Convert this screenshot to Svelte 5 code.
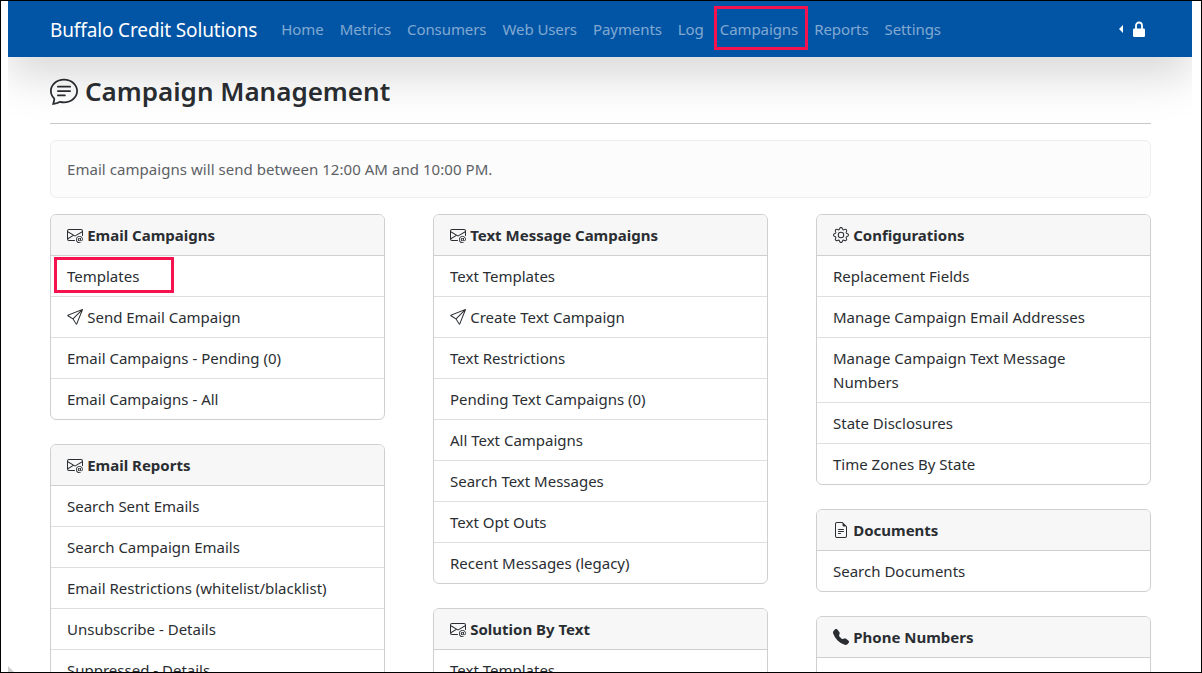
<script>
  const columns = [
    [
      { title: 'Email Campaigns', icon: 'mail', items: ['Templates', { send: true, label: 'Send Email Campaign' }, 'Email Campaigns - Pending (0)', 'Email Campaigns - All'] },
      { title: 'Email Reports', icon: 'mail', items: ['Search Sent Emails', 'Search Campaign Emails', 'Email Restrictions (whitelist/blacklist)', 'Unsubscribe - Details', 'Suppressed - Details'] }
    ],
    [
      { title: 'Text Message Campaigns', icon: 'mail', items: ['Text Templates', { send: true, label: 'Create Text Campaign' }, 'Text Restrictions', 'Pending Text Campaigns (0)', 'All Text Campaigns', 'Search Text Messages', 'Text Opt Outs', 'Recent Messages (legacy)'] },
      { title: 'Solution By Text', icon: 'mail', items: ['Text Templates'] }
    ],
    [
      { title: 'Configurations', icon: 'gear', items: ['Replacement Fields', 'Manage Campaign Email Addresses', 'Manage Campaign Text Message Numbers', 'State Disclosures', 'Time Zones By State'] },
      { title: 'Documents', icon: 'doc', items: ['Search Documents'] },
      { title: 'Phone Numbers', icon: 'phone', items: ['Manage Phone Numbers'] }
    ]
  ];
  const nav = ['Home', 'Metrics', 'Consumers', 'Web Users', 'Payments', 'Log', 'Campaigns', 'Reports', 'Settings'];
</script>

{#snippet icon(name)}
  {#if name === 'mail'}
    <svg class="ic" viewBox="0 0 16 16" fill="currentColor"><path d="M2 2a2 2 0 0 0-2 2v8.01A2 2 0 0 0 2 14h5.5a.5.5 0 0 0 0-1H2a1 1 0 0 1-.966-.741l5.64-3.471L8 9.583l7-4.2V8.5a.5.5 0 0 0 1 0V4a2 2 0 0 0-2-2H2Zm3.708 6.208L1 11.105V5.383l4.708 2.825ZM1 4.217V4a1 1 0 0 1 1-1h12a1 1 0 0 1 1 1v.217l-7 4.2-7-4.2Z"/><path d="M14.247 14.269c1.01 0 1.587-.857 1.587-2.025v-.21C15.834 10.43 14.64 9 12.52 9h-.035C10.42 9 9 10.36 9 12.432v.214C9 14.82 10.438 16 12.358 16h.044c.594 0 1.018-.074 1.237-.175v-.73c-.245.11-.673.18-1.18.18h-.044c-1.334 0-2.571-.788-2.571-2.655v-.157c0-1.657 1.058-2.724 2.64-2.724h.04c1.535 0 2.484 1.05 2.484 2.326v.118c0 .975-.324 1.39-.639 1.39-.232 0-.41-.148-.41-.42v-2.19h-.906v.569h-.03c-.084-.298-.368-.63-.954-.63-.778 0-1.259.555-1.259 1.4v.528c0 .892.49 1.434 1.26 1.434.471 0 .896-.227 1.014-.643h.043c.118.42.617.648 1.12.648Zm-2.453-1.588v-.227c0-.546.227-.791.573-.791.297 0 .572.192.572.708v.367c0 .573-.253.744-.564.744-.354 0-.581-.215-.581-.8Z"/></svg>
  {:else if name === 'gear'}
    <svg class="ic" viewBox="0 0 16 16" fill="currentColor"><path d="M8 4.754a3.246 3.246 0 1 0 0 6.492 3.246 3.246 0 0 0 0-6.492zM5.754 8a2.246 2.246 0 1 1 4.492 0 2.246 2.246 0 0 1-4.492 0z"/><path d="M9.796 1.343c-.527-1.79-3.065-1.79-3.592 0l-.094.319a.873.873 0 0 1-1.255.52l-.292-.16c-1.64-.892-3.433.902-2.54 2.541l.159.292a.873.873 0 0 1-.52 1.255l-.319.094c-1.79.527-1.79 3.065 0 3.592l.319.094a.873.873 0 0 1 .52 1.255l-.16.292c-.892 1.64.901 3.434 2.541 2.54l.292-.159a.873.873 0 0 1 1.255.52l.094.319c.527 1.79 3.065 1.79 3.592 0l.094-.319a.873.873 0 0 1 1.255-.52l.292.16c1.64.893 3.434-.902 2.54-2.541l-.159-.292a.873.873 0 0 1 .52-1.255l.319-.094c1.79-.527 1.79-3.065 0-3.592l-.319-.094a.873.873 0 0 1-.52-1.255l.16-.292c.893-1.64-.902-3.433-2.541-2.54l-.292.159a.873.873 0 0 1-1.255-.52l-.094-.319zm-2.633.283c.246-.835 1.428-.835 1.674 0l.094.319a1.873 1.873 0 0 0 2.693 1.115l.291-.16c.764-.415 1.6.42 1.184 1.185l-.159.292a1.873 1.873 0 0 0 1.116 2.692l.318.094c.835.246.835 1.428 0 1.674l-.319.094a1.873 1.873 0 0 0-1.115 2.693l.16.291c.415.764-.42 1.6-1.185 1.184l-.291-.159a1.873 1.873 0 0 0-2.693 1.116l-.094.318c-.246.835-1.428.835-1.674 0l-.094-.319a1.873 1.873 0 0 0-2.692-1.115l-.292.16c-.764.415-1.6-.42-1.184-1.185l.159-.291A1.873 1.873 0 0 0 1.945 8.93l-.319-.094c-.835-.246-.835-1.428 0-1.674l.319-.094A1.873 1.873 0 0 0 3.06 4.377l-.16-.292c-.415-.764.42-1.6 1.185-1.184l.292.159a1.873 1.873 0 0 0 2.692-1.115l.094-.319z"/></svg>
  {:else if name === 'doc'}
    <svg class="ic" viewBox="0 0 16 16" fill="currentColor"><path d="M5.5 7a.5.5 0 0 0 0 1h5a.5.5 0 0 0 0-1h-5zM5 9.5a.5.5 0 0 1 .5-.5h5a.5.5 0 0 1 0 1h-5a.5.5 0 0 1-.5-.5zm0 2a.5.5 0 0 1 .5-.5h2a.5.5 0 0 1 0 1h-2a.5.5 0 0 1-.5-.5z"/><path d="M9.5 0H4a2 2 0 0 0-2 2v12a2 2 0 0 0 2 2h8a2 2 0 0 0 2-2V4.5L9.5 0zm0 1v2A1.5 1.5 0 0 0 11 4.5h2V14a1 1 0 0 1-1 1H4a1 1 0 0 1-1-1V2a1 1 0 0 1 1-1h5.5z"/></svg>
  {:else if name === 'phone'}
    <svg class="ic" viewBox="0 0 16 16" fill="currentColor"><path fill-rule="evenodd" d="M1.885.511a1.745 1.745 0 0 1 2.61.163L6.29 2.98c.329.423.445.974.315 1.494l-.547 2.19a.678.678 0 0 0 .178.643l2.457 2.457a.678.678 0 0 0 .644.178l2.189-.547a1.745 1.745 0 0 1 1.494.315l2.306 1.794c.829.645.905 1.87.163 2.611l-1.034 1.034c-.74.74-1.846 1.065-2.877.702a18.634 18.634 0 0 1-7.01-4.42 18.634 18.634 0 0 1-4.42-7.009c-.362-1.03-.037-2.137.703-2.877L1.885.511z"/></svg>
  {:else if name === 'send'}
    <svg class="ic" viewBox="0 0 16 16" fill="currentColor"><path d="M15.854.146a.5.5 0 0 1 .11.54l-5.819 14.547a.75.75 0 0 1-1.329.124l-3.178-4.995L.643 7.184a.75.75 0 0 1 .124-1.33L15.314.037a.5.5 0 0 1 .54.11ZM6.636 10.07l2.761 4.338L14.13 2.576 6.636 10.07Zm6.787-8.201L1.591 6.602l4.339 2.76 7.494-7.493Z"/></svg>
  {/if}
{/snippet}

<div class="frame">
  <div class="page">
    <nav class="navbar">
      <span class="brand">Buffalo Credit Solutions</span>
      <ul class="links">
        {#each nav as n}
          <li>{n}</li>
        {/each}
      </ul>
      <span class="caret"></span>
      <svg class="lock" viewBox="0 0 12 16" fill="currentColor"><path d="M3 8V4.5a3 3 0 0 1 6 0V8" fill="none" stroke="currentColor" stroke-width="1.8"/><rect x="0" y="7.5" width="12" height="8.5" rx="1.3"/></svg>
      <span class="mark mark-nav"></span>
    </nav>

    <main class="container">
      <h1 class="title">
        <svg class="title-ic" viewBox="0 0 16 16" fill="currentColor"><path d="M2.678 11.894a1 1 0 0 1 .287.801 10.97 10.97 0 0 1-.398 2c1.395-.323 2.247-.697 2.634-.893a1 1 0 0 1 .71-.074A8.06 8.06 0 0 0 8 14c3.996 0 7-2.807 7-6 0-3.192-3.004-6-7-6S1 4.808 1 8c0 1.468.617 2.83 1.678 3.894zm-.493 3.905a21.682 21.682 0 0 1-.713.129c-.2.032-.352-.176-.273-.362a9.68 9.68 0 0 0 .244-.637l.003-.01c.248-.72.45-1.548.524-2.319C.743 11.37 0 9.76 0 8c0-3.866 3.582-7 8-7s8 3.134 8 7-3.582 7-8 7a9.06 9.06 0 0 1-2.347-.306c-.52.263-1.639.742-3.468 1.105z"/><path d="M4 5.5a.5.5 0 0 1 .5-.5h7a.5.5 0 0 1 0 1h-7a.5.5 0 0 1-.5-.5zM4 8a.5.5 0 0 1 .5-.5h7a.5.5 0 0 1 0 1h-7A.5.5 0 0 1 4 8zm0 2.5a.5.5 0 0 1 .5-.5h4a.5.5 0 0 1 0 1h-4a.5.5 0 0 1-.5-.5z"/></svg>
        Campaign Management
      </h1>
      <hr class="rule" />
      <div class="notice">Email campaigns will send between 12:00 AM and 10:00 PM.</div>
      <div class="grid">
        {#each columns as col}
          <div class="col">
            {#each col as card}
              <section class="card">
                <header class="head">{@render icon(card.icon)}<span>{card.title}</span></header>
                {#each card.items as item}
                  <div class="item">
                    {#if typeof item === 'string'}
                      {#if item === 'Templates'}<span class="mark mark-item"></span>{/if}
                      {item}
                    {:else}
                      {@render icon('send')}<span>{item.label}</span>
                    {/if}
                  </div>
                {/each}
              </section>
            {/each}
          </div>
        {/each}
      </div>
    </main>
  </div>
  <span class="corner"></span>
</div>

<style>
  :global(body) {
    margin: 0;
    background: #fff;
  }
  .frame {
    position: relative;
    box-sizing: border-box;
    width: 1202px;
    height: 673px;
    border: 1px solid #000;
    padding: 0 9px 0 7px;
    overflow: hidden;
    background: #fff;
  }
  .page {
    height: 100%;
    overflow: hidden;
    font-family: "Noto Sans", sans-serif;
    font-size: 15px;
    color: #2a2e32;
  }
  .navbar {
    position: relative;
    z-index: 1;
    display: flex;
    align-items: center;
    height: 56px;
    padding: 0 47px 0 42px;
    background: #0254a5;
    box-shadow: 0 16px 48px rgba(0, 0, 0, 0.175);
    color: #fff;
  }
  .brand {
    font-size: 19px;
    letter-spacing: -0.13px;
    padding-top: 1px;
    margin-right: 16px;
  }
  .links {
    display: flex;
    flex: 1;
    list-style: none;
    margin: 0;
    padding: 0;
    letter-spacing: -0.08px;
  }
  .links li {
    padding: 0 8px;
    color: rgba(255, 255, 255, 0.5);
  }
  .caret {
    border-style: solid;
    border-width: 4px 4px 4px 0;
    border-color: transparent #fff transparent transparent;
    margin-right: 10px;
  }
  .lock {
    width: 12px;
    height: 16px;
  }
  .mark {
    position: absolute;
    box-sizing: border-box;
    border: 3px solid #f5124f;
    pointer-events: none;
  }
  .mark-nav {
    left: 706px;
    top: 5px;
    width: 94px;
    height: 44px;
  }
  .container {
    padding: 0 41px 0 42px;
  }
  .title {
    display: flex;
    align-items: center;
    gap: 7px;
    margin: 0;
    padding-top: 1px;
    height: 65px;
    font-size: 26px;
    font-weight: 600;
  }
  .title-ic {
    width: 28px;
    height: 28px;
  }
  .rule {
    margin: 0 0 16px;
    border: 0;
    border-top: 1px solid #c8c8c8;
  }
  .notice {
    box-sizing: border-box;
    height: 58px;
    display: flex;
    align-items: center;
    padding: 0 16px;
    border: 1px solid #eeeeee;
    border-radius: 6px;
    background: #fcfcfc;
    color: #5c6166;
    letter-spacing: 0.05px;
  }
  .grid {
    display: grid;
    grid-template-columns: repeat(3, 335px);
    column-gap: 48px;
    margin-top: 16px;
  }
  .col {
    display: flex;
    flex-direction: column;
    gap: 24px;
  }
  .card {
    border: 1px solid #cfcfcf;
    border-radius: 6px;
    overflow: hidden;
  }
  .head {
    display: flex;
    align-items: center;
    gap: 4.2px;
    padding: 8px 16px;
    height: 24px;
    background: #f7f7f7;
    border-bottom: 1px solid #cfcfcf;
    font-weight: 700;
  }
  .item {
    position: relative;
    padding: 8px 16px;
    line-height: 24px;
    border-bottom: 1px solid #dfdfdf;
  }
  .item:last-child {
    border-bottom: 0;
  }
  .ic {
    width: 16px;
    height: 16px;
    flex: none;
    vertical-align: -2px;
    margin-right: 4.2px;
  }
  .head .ic {
    margin-right: 0;
  }
  .mark-item {
    left: 3px;
    top: 1px;
    width: 120px;
    height: 36px;
  }
  .corner {
    position: absolute;
    left: 7px;
    bottom: 0;
    width: 6px;
    height: 6px;
    background: #cfcfcf;
    clip-path: polygon(0 0, 100% 100%, 0 100%);
  }
</style>
